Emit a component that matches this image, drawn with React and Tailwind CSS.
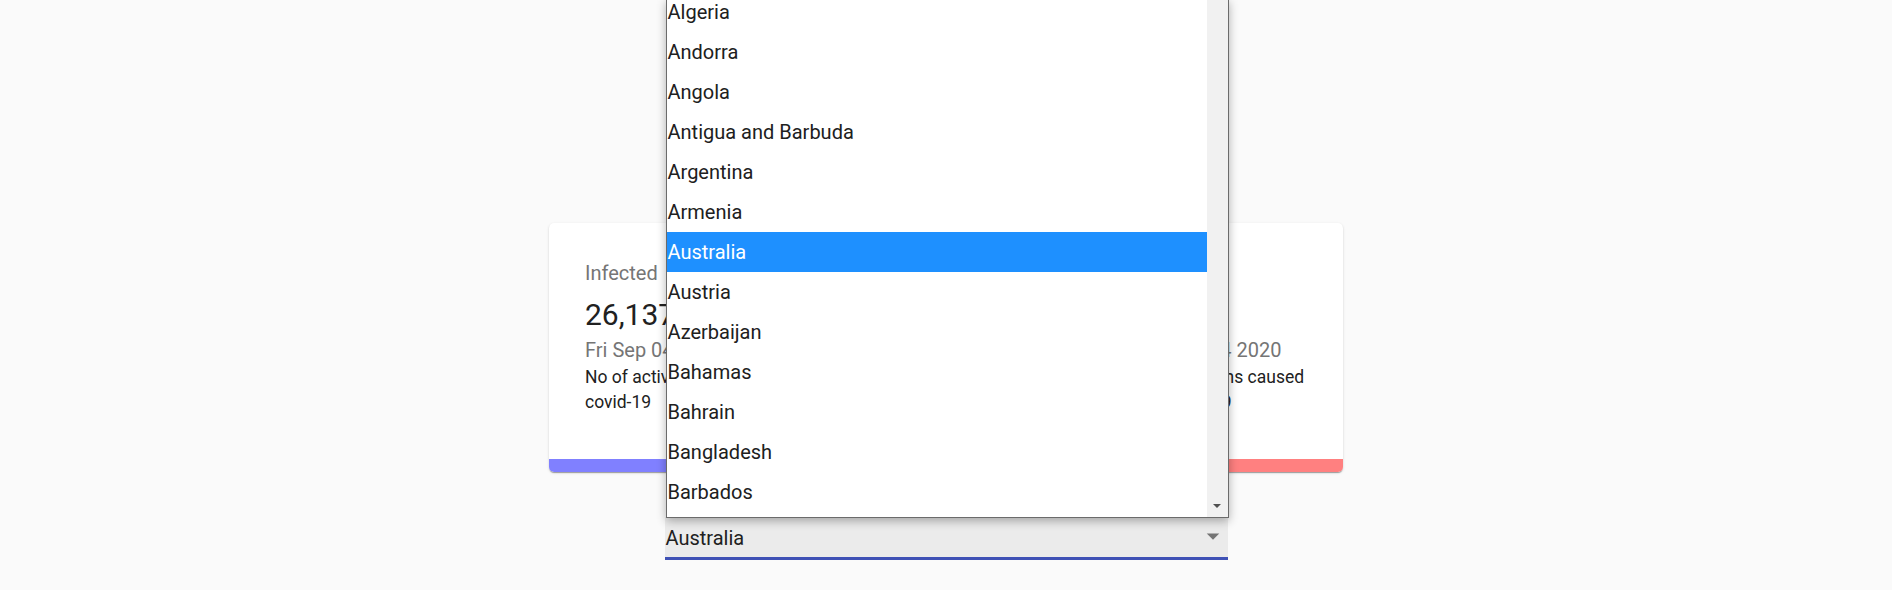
import React from "react";

const countries = [
  "Algeria",
  "Andorra",
  "Angola",
  "Antigua and Barbuda",
  "Argentina",
  "Armenia",
  "Australia",
  "Austria",
  "Azerbaijan",
  "Bahamas",
  "Bahrain",
  "Bangladesh",
  "Barbados",
  "Belarus",
];

const cards = [
  { title: "Infected", value: "26,137", text: "No of active cases of covid-19", bar: "bg-[#8080ff]" },
  { title: "Recovered", value: "22,347", text: "No of recoveries from covid-19", bar: "bg-[#80ff80]" },
  { title: "Deaths", value: "753", text: "No of deaths caused by covid-19", bar: "bg-[#ff8080]" },
];

const StatCard = ({ card }) => (
  <div className="w-[236px] h-[249px] flex flex-col bg-white rounded-[5px] overflow-hidden shadow-[0_2px_1px_-1px_rgba(0,0,0,0.2),0_1px_1px_0_rgba(0,0,0,0.14),0_1px_3px_0_rgba(0,0,0,0.12)]">
    <div className="flex-1 pt-[35px] pl-[36px] pr-[20px]">
      <p className="text-[20px] leading-[30px] text-[#757575] mb-[7px]">{card.title}</p>
      <p className="text-[30px] leading-[40px] text-[#212121]">{card.value}</p>
      <p className="text-[20px] leading-[30px] text-[#757575]">Fri Sep 04 2020</p>
      <p className="text-[17.5px] leading-[25px] text-[#212121]">{card.text}</p>
    </div>
    <div className={`h-[13px] ${card.bar}`} />
  </div>
);

const App = () => {
  return (
    <div className="min-h-[590px] bg-[#fafafa] flex flex-col items-center pt-[223px] overflow-hidden font-['Roboto',sans-serif]">
      {/* Cards */}
      <div className="flex gap-[43px]">
        {cards.map((c) => (
          <StatCard key={c.title} card={c} />
        ))}
      </div>

      {/* Country select */}
      <div className="relative w-[563px] mt-[45px]">
        <div className="relative h-[40px] bg-[#ebebeb] flex items-center pl-[1px]">
          <span className="text-[20px] text-[#212121] leading-[24px] pt-[1px]">Australia</span>
          <svg className="absolute right-0 top-[4px] w-[30px] h-[30px]" viewBox="0 0 24 24">
            <path d="M7 10l5 5 5-5z" fill="#757575" />
          </svg>
        </div>
        <div className="h-[3px] bg-[#3f51b5]" />

        {/* Native dropdown popup */}
        <div className="absolute left-[1px] bottom-[42px] h-[519px] w-[563px] bg-white border border-[#6b6b6b] shadow-[0_3px_9px_rgba(0,0,0,0.3)] flex overflow-hidden">
          <div className="flex-1 overflow-hidden">
            <div className="-mt-[8px]">
              {countries.map((name) => (
                <div
                  key={name}
                  className={`h-[40px] leading-[40px] text-[20px] pl-[1px] ${
                    name === "Australia" ? "bg-[#1e90ff] text-white" : "text-[#202020]"
                  }`}
                >
                  {name}
                </div>
              ))}
            </div>
          </div>
          <div className="w-[21px] bg-[#f1f1f1] flex flex-col justify-end items-center pb-[9px]">
            <svg width="8" height="4" viewBox="0 0 8 4">
              <path d="M0 0h8L4 4z" fill="#505050" />
            </svg>
          </div>
        </div>
      </div>
    </div>
  );
};

export default App;
